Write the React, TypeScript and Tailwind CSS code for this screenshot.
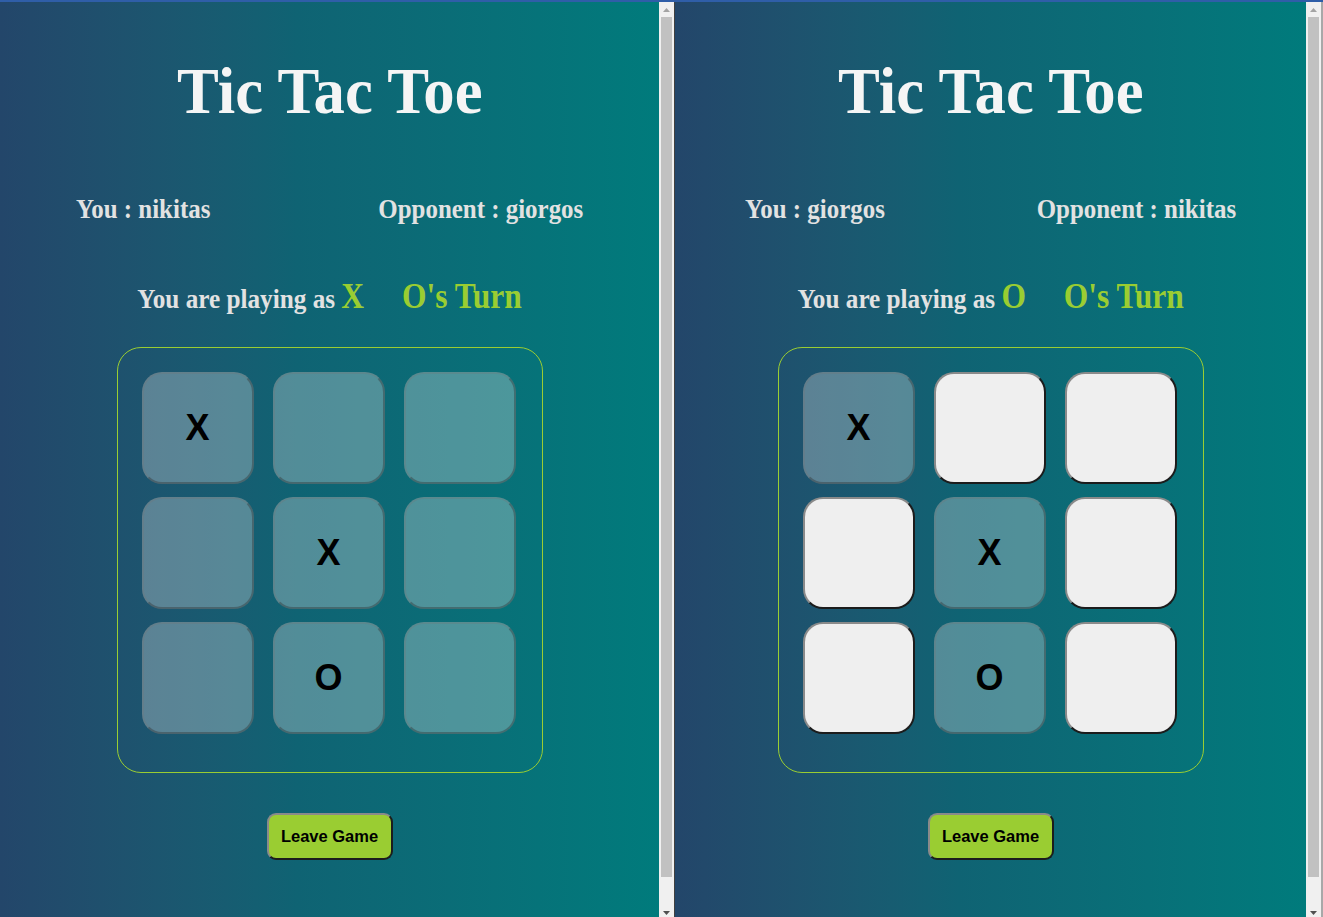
import React from "react";

type Cell = "" | "X" | "O";

const board: Cell[] = ["X", "", "", "", "X", "", "", "O", ""];

function CellBox({ v, enabled }: { v: Cell; enabled: boolean }) {
  const base =
    "w-[112px] h-[112px] rounded-[20px] border-2 flex items-center justify-center font-['Liberation_Sans',Arial,sans-serif] font-bold text-[36px] leading-none text-black";
  const on =
    "bg-[#efefef] border-t-[#8a8a8a] border-l-[#8a8a8a] border-b-[#1c1c1c] border-r-[#1c1c1c]";
  const off =
    "bg-[#efefef]/30 border-t-[#767676]/30 border-l-[#767676]/30 border-b-[#333333]/40 border-r-[#333333]/40";
  return <div className={`${base} ${enabled ? on : off}`}>{v}</div>;
}

function Pane({
  you,
  opp,
  sym,
  myTurn,
  widthClass,
  padClass,
}: {
  you: string;
  opp: string;
  sym: string;
  myTurn: boolean;
  widthClass: string;
  padClass: string;
}) {
  return (
    <div
      className={`${widthClass} h-full shrink-0 bg-linear-to-r from-[#23466a] via-[#0f6373] via-45% to-[#007b7c] flex flex-col items-center font-['Liberation_Serif','Times_New_Roman',serif]`}
    >
      <h1 className="mt-[56px] h-[66px] text-[66px] leading-none font-bold text-[#f5f5f5] scale-x-[0.95] whitespace-nowrap">
        Tic Tac Toe
      </h1>

      <div className={`w-full mt-[71px] flex justify-between ${padClass}`}>
        <span className="inline-block origin-left scale-x-[0.89] text-[28px] leading-none font-bold text-[#e2e2e2] whitespace-nowrap">
          You : {you}
        </span>
        <span className="inline-block origin-right scale-x-[0.89] text-[28px] leading-none font-bold text-[#e2e2e2] whitespace-nowrap">
          Opponent : {opp}
        </span>
      </div>

      <div className="w-full mt-[56px] flex justify-center">
        <div className="flex items-baseline gap-[42px] scale-x-[0.9] leading-none font-bold whitespace-nowrap">
          <span className="text-[28px] text-[#e2e2e2]">
            You are playing as <span className="text-[35px] text-[#9acd32]">{sym}</span>
          </span>
          <span className="text-[35px] text-[#9acd32]">O's Turn</span>
        </div>
      </div>

      <div className="mt-[33px] w-[426px] h-[426px] shrink-0 border border-[#9acd32] rounded-[24px] pt-[24px] pl-[24px] grid grid-cols-[repeat(3,112px)] grid-rows-[repeat(3,112px)] gap-x-[19px] gap-y-[13px]">
        {board.map((v, i) => (
          <CellBox key={i} v={v} enabled={myTurn && v === ""} />
        ))}
      </div>

      <button className="mt-[40px] w-[126px] h-[47px] shrink-0 rounded-[9px] bg-[#9acd32] border-2 border-t-[#8a8a8a] border-l-[#8a8a8a] border-b-[#1c1c1c] border-r-[#1c1c1c] font-['Liberation_Sans',Arial,sans-serif] font-bold text-[16.5px] text-black">
        Leave Game
      </button>
    </div>
  );
}

function Scrollbar() {
  return (
    <div className="w-[15px] h-full shrink-0 bg-[#f0f0f0] flex flex-col items-center">
      <div className="h-[15px] w-full flex items-center justify-center">
        <svg width="7" height="4" viewBox="0 0 7 4">
          <path d="M3.5 0L7 4H0z" fill="#a3a3a3" />
        </svg>
      </div>
      <div className="w-[11px] h-[860px] bg-[#c1c1c1]" />
      <div className="flex-1" />
      <div className="h-[6px] w-full flex items-start justify-center">
        <svg width="7" height="4" viewBox="0 0 7 4">
          <path d="M0 0H7L3.5 4z" fill="#505050" />
        </svg>
      </div>
    </div>
  );
}

export default function App() {
  return (
    <div className="w-[1323px] h-[917px] overflow-hidden flex flex-col bg-[#2b2b2b]">
      <div className="h-[2px] shrink-0 bg-[#2f5ea8]" />
      <div className="flex flex-1 min-h-0">
        <Pane
          you="nikitas"
          opp="giorgos"
          sym="X"
          myTurn={false}
          widthClass="w-[659px]"
          padClass="px-[76px]"
        />
        <Scrollbar />
        <div className="w-px shrink-0 bg-[#404040]" />
        <Pane
          you="giorgos"
          opp="nikitas"
          sym="O"
          myTurn={true}
          widthClass="w-[631px]"
          padClass="px-[70px]"
        />
        <Scrollbar />
        <div className="w-[2px] shrink-0 bg-[#a8a8a8]" />
      </div>
    </div>
  );
}
